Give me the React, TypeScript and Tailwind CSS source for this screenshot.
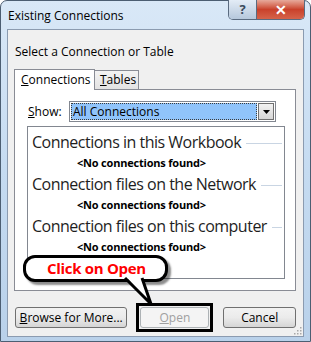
import React from 'react'

const font = "font-['Segoe_UI','Open_Sans',sans-serif]"

const Section = ({ title }: { title: string }) => (
  <div className="flex flex-col">
    <div className="flex items-center gap-[5px] pr-[2px]">
      <span className="text-[16px] leading-[22px] text-[#1e1e1e] whitespace-nowrap tracking-[-0.5px]">{title}</span>
      <div className="flex-1 h-px bg-[#c9d5e3] mt-[2px]" />
    </div>
    <div className="pl-[45px] text-[11px] leading-[20px] font-bold text-black tracking-[-0.2px]">&lt;No connections found&gt;</div>
  </div>
)

const Btn = ({ children, disabled, className }: { children: React.ReactNode; disabled?: boolean; className?: string }) => (
  <div
    className={
      'h-[21px] flex items-center justify-center rounded-[3px] border text-[12px] ' +
      (disabled
        ? 'border-[#adb2b5] bg-[#f4f4f4] text-[#a0a0a0] '
        : 'border-[#707070] bg-gradient-to-b from-[#f2f2f2] via-[#ebebeb] to-[#d5d5d5] text-black ') +
      (className || '')
    }
  >
    {children}
  </div>
)

export default function App() {
  return (
    <div className={`${font} w-[311px] h-[342px] relative overflow-hidden`}>
      <div className="w-full h-full rounded-t-[7px] border border-[#4c5e72] bg-gradient-to-b from-[#d9e8f7] via-[#c5dbf1] to-[#b9d1ea] flex flex-col px-[6px] pb-[4px]">
        {/* title bar */}
        <div className="h-[28px] flex justify-between shrink-0">
          <span className="text-[12px] leading-[30px] pl-[1px] text-black">Existing Connections</span>
          <div className="flex h-[20px] -mt-px -mr-[1px] rounded-b-[5px] overflow-hidden border border-t-0 border-[#5a6b80]">
            <div className="w-[28px] flex items-center justify-center bg-gradient-to-b from-[#e3ecf6] to-[#b6c8dc] border-r border-[#5a6b80] text-[13px] font-bold text-[#3a4a5c]">?</div>
            <div className="w-[47px] flex items-center justify-center bg-gradient-to-b from-[#e6a99b] via-[#c9412b] to-[#d5634a] text-white text-[14px] font-bold">✕</div>
          </div>
        </div>

        {/* client area */}
        <div className="flex-1 border border-[#8b9bb0] bg-[#f0f0f0] flex flex-col relative">
          <div className="pl-[7px] pt-[15px] text-[12px] leading-[14px] text-black">Select a Connection or Table</div>

          {/* tabs */}
          <div className="flex items-end pl-[6px] mt-[9px] h-[21px]">
            <div className="w-[81px] h-[21px] border border-b-0 border-[#898c95] bg-white text-[12px] flex items-center pl-[6px] relative z-10 -mb-px">
              <span><span className="underline">C</span>onnections</span>
            </div>
            <div className="w-[44px] h-[19px] border border-l-0 border-b-0 border-[#898c95] bg-gradient-to-b from-[#f3f3f3] to-[#e3e3e3] text-[12px] flex items-center pl-[5px]">
              <span><span className="underline">T</span>ables</span>
            </div>
          </div>

          {/* tab panel */}
          <div className="ml-[6px] mr-[7px] h-[202px] border border-[#898c95] bg-white flex flex-col pt-[11px] pl-[12px] pr-[10px]">
            <div className="flex items-center h-[21px]">
              <span className="w-[42px] pl-[1px] text-[12px]"><span className="underline">S</span>how:</span>
              <div className="flex-1 h-[21px] border border-[#828790] bg-white p-[1px] flex mr-[9px]">
                <div className="flex-1 bg-[#90c4fb] border border-dotted border-[#3b3b3b] text-[12px] leading-[15px] pl-[1px]">All Connections</div>
                <div className="w-[16px] ml-[1px] border border-[#707070] bg-gradient-to-b from-[#f2f2f2] to-[#d6d6d6] flex items-center justify-center">
                  <svg width="7" height="4" viewBox="0 0 7 4"><path d="M0 0h7L3.5 4z" fill="#000" /></svg>
                </div>
              </div>
            </div>
            <div className="mt-[4px] h-[153px] border border-[#828790] bg-white pl-[4px] pt-[4px] flex flex-col">
              <Section title="Connections in this Workbook" />
              <Section title="Connection files on the Network" />
              <Section title="Connection files on this computer" />
            </div>
          </div>

          {/* buttons */}
          <div className="flex items-center mt-[12px] pl-[7px] pr-[7px]">
            <Btn className="w-[113px]"><span><span className="underline">B</span>rowse for More...</span></Btn>
            <div className="ml-[9px] border-[3px] border-black p-px">
              <Btn disabled className="w-[69px]"><span><span className="underline">O</span>pen</span></Btn>
            </div>
            <Btn className="w-[73px] ml-[10px]">Cancel</Btn>
          </div>

          {/* resize grip */}
          <svg className="absolute right-[1px] bottom-[1px]" width="10" height="10" viewBox="0 0 10 10">
            {[[8, 2], [8, 5], [5, 5], [8, 8], [5, 8], [2, 8]].map(([x, y], i) => (
              <rect key={i} x={x} y={y} width="1.5" height="1.5" fill="#a8a8a8" />
            ))}
          </svg>
        </div>
      </div>

      {/* callout overlay */}
      <div className="absolute left-[23px] top-[255px]">
        <div className="relative w-[145px] h-[27px] rounded-[12px] border-[3px] border-black bg-white shadow-[3px_3px_2px_rgba(0,0,0,0.45)] flex items-center pl-[21px] z-10">
          <span className="text-[15px] font-bold text-[#ff0000] tracking-[-0.3px]">Click on Open</span>
        </div>
        <svg className="absolute left-[100px] top-[21px] z-20" width="34" height="30" viewBox="0 0 34 30">
          <path d="M2 0 L28 27 L19 0 Z" fill="#fff" stroke="none" />
          <path d="M2 2 L28 28 L19 2" fill="none" stroke="#000" strokeWidth="3" strokeLinejoin="miter" />
        </svg>
      </div>
    </div>
  )
}
